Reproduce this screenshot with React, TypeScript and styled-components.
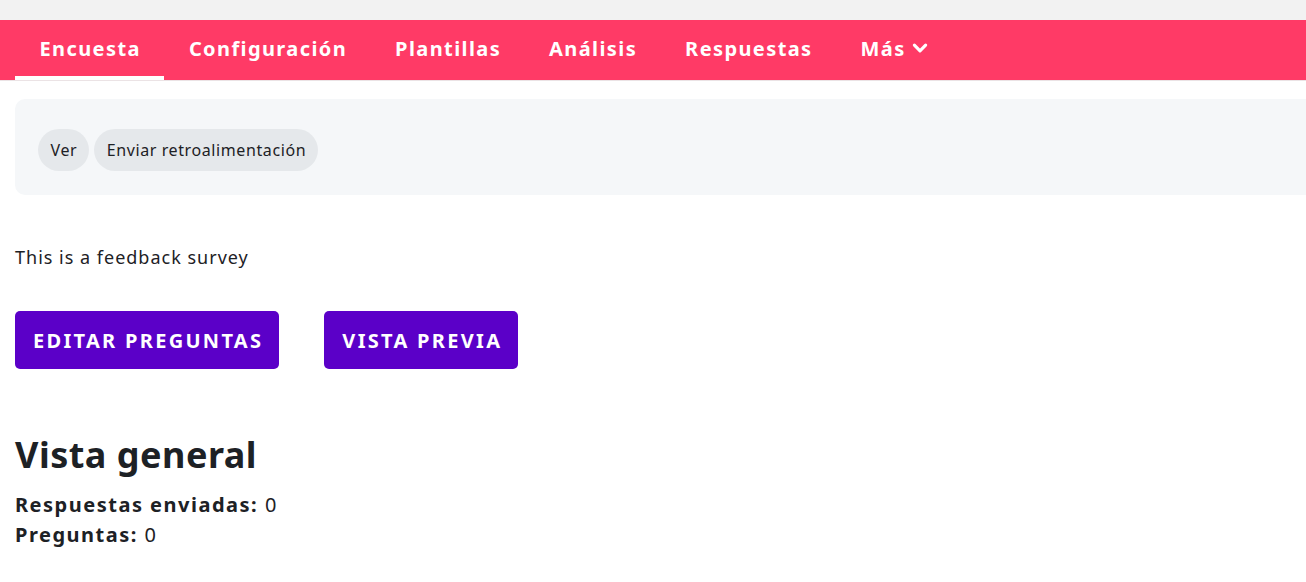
import React from 'react';
import styled, { createGlobalStyle } from 'styled-components';

const GlobalStyle = createGlobalStyle`
  html, body {
    margin: 0;
    padding: 0;
    background: #ffffff;
    font-family: 'Noto Sans', 'Open Sans', sans-serif;
    color: #1d2125;
  }
`;

const tabs = ['Encuesta', 'Configuración', 'Plantillas', 'Análisis', 'Respuestas'];

const App = () => {
  return (
    <>
      <GlobalStyle />
      <TopStrip />
      <NavBar>
        {tabs.map((tab, i) => (
          <Tab key={tab} $active={i === 0}>
            {tab}
          </Tab>
        ))}
        <Tab>
          Más
          <Chevron viewBox='0 0 16 16'>
            <path d='M3 5.5 L8 10.5 L13 5.5' />
          </Chevron>
        </Tab>
      </NavBar>

      <Main>
        <ActionPanel>
          <Pill>Ver</Pill>
          <Pill>Enviar retroalimentación</Pill>
        </ActionPanel>

        <Intro>This is a feedback survey</Intro>

        <ButtonRow>
          <PrimaryButton>Editar preguntas</PrimaryButton>
          <PrimaryButton>Vista previa</PrimaryButton>
        </ButtonRow>

        <Heading>Vista general</Heading>
        <Stat>
          <strong>Respuestas enviadas:</strong> 0
        </Stat>
        <Stat>
          <strong>Preguntas:</strong> 0
        </Stat>
      </Main>
    </>
  );
};
export default App;

const TopStrip = styled.div`
  height: 20px;
  background-color: #f2f2f2;
`;

const NavBar = styled.nav`
  display: flex;
  height: 61px;
  padding-left: 15px;
  background-color: #ff3a66;
  border-bottom: 1px solid #ebe3e5;
  box-sizing: border-box;
`;

const Tab = styled.div<{ $active?: boolean }>`
  display: flex;
  align-items: center;
  gap: 5px;
  padding: 0 23.5px 0 24.5px;
  color: #ffffff;
  font-size: 20px;
  font-weight: 700;
  letter-spacing: 1.4px;
  box-sizing: border-box;
  border-bottom: 4px solid ${({ $active }) => ($active ? '#ffffff' : 'transparent')};
`;

const Chevron = styled.svg`
  width: 18px;
  height: 18px;
  fill: none;
  stroke: #ffffff;
  stroke-width: 2.8;
  stroke-linecap: round;
  stroke-linejoin: round;
`;

const Main = styled.main`
  padding: 18px 0 0 15px;
`;

// 상단 액션 패널
const ActionPanel = styled.div`
  display: flex;
  align-items: center;
  gap: 5px;
  height: 96px;
  padding: 6px 0 0 23px;
  box-sizing: border-box;
  background-color: #f5f7f9;
  border-radius: 10px 0 0 10px;
`;

const Pill = styled.span`
  display: inline-flex;
  align-items: center;
  height: 42px;
  padding: 0 12px 0 12.5px;
  border-radius: 21px;
  background-color: #e5e8eb;
  font-size: 16px;
  letter-spacing: 0.6px;
  color: #1d2125;
`;

const Intro = styled.p`
  margin: 48px 0 0;
  font-size: 18px;
  line-height: 28px;
  letter-spacing: 1px;
`;

const ButtonRow = styled.div`
  display: flex;
  gap: 45px;
  margin-top: 40px;
`;

const PrimaryButton = styled.button`
  height: 58px;
  padding: 0 16px 0 18px;
  border: none;
  border-radius: 5px;
  background-color: #5b00c8;
  color: #ffffff;
  font-family: inherit;
  font-size: 20px;
  font-weight: 700;
  text-transform: uppercase;
  letter-spacing: 2.3px;
  cursor: pointer;
`;

const Heading = styled.h2`
  margin: 64px 0 13px;
  font-size: 36px;
  font-weight: 700;
  line-height: 44px;
  letter-spacing: 0.5px;
`;

const Stat = styled.div`
  font-size: 20px;
  line-height: 30px;
  letter-spacing: 1.5px;
  strong {
    font-weight: 700;
  }
`;
